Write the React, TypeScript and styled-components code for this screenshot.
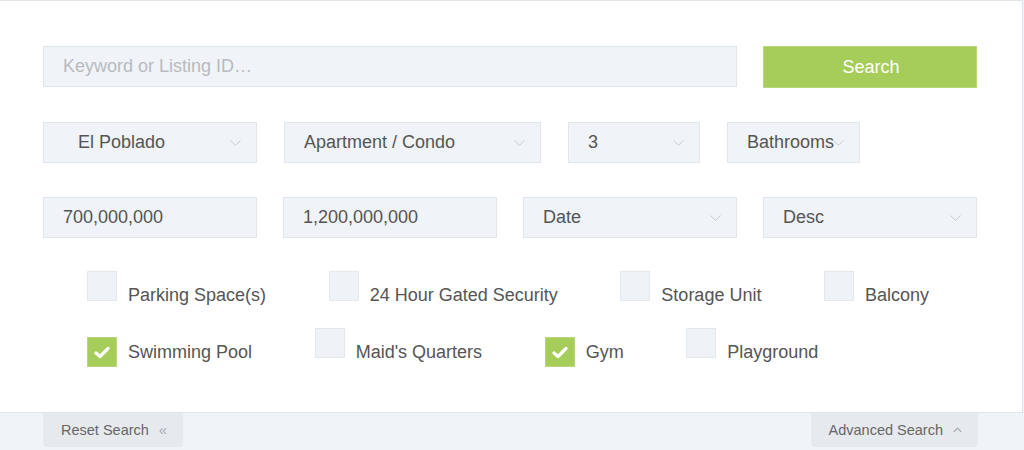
import React from 'react';
import styled, { createGlobalStyle } from 'styled-components';

const GlobalStyle = createGlobalStyle`
  html, body {
    margin: 0;
    padding: 0;
    background: #ffffff;
  }
  body {
    font-family: 'Liberation Sans', Arial, sans-serif;
  }
`;

const Page = styled.div`
  width: 1024px;
  height: 450px;
  overflow: hidden;
  background: #f0f3f7;
`;

const Panel = styled.form`
  box-sizing: border-box;
  width: 1023px;
  height: 413px;
  padding: 45px 46px 0 43px;
  background: #ffffff;
  border-top: 1px solid #e1e5ea;
  border-right: 1px solid #e1e5ea;
  border-bottom: 1px solid #e1e5ea;
`;

const GridRow = styled.div<{ $mb?: number }>`
  display: grid;
  grid-template-columns: repeat(4, 214px);
  column-gap: 26px;
  align-items: start;
  margin-bottom: ${p => p.$mb || 0}px;
`;

const FlexRow = styled.div`
  display: flex;
  gap: 27px;
  margin-bottom: 34px;
`;

const Field = styled.div<{ $span?: number; $w?: number; $indent?: number; $placeholder?: boolean }>`
  box-sizing: border-box;
  position: relative;
  height: 41px;
  ${p => (p.$span ? `grid-column: span ${p.$span};` : '')}
  ${p => (p.$w ? `width: ${p.$w}px;` : '')}
  display: flex;
  align-items: center;
  padding-left: ${p => p.$indent ?? 19}px;
  background: #f0f3f7;
  border: 1px solid #e1e6eb;
  font-size: 18px;
  color: ${p => (p.$placeholder ? '#b8bbbf' : '#555555')};
  white-space: nowrap;
`;

const Chevron = styled.svg`
  position: absolute;
  right: 15px;
  top: 17px;
  width: 11px;
  height: 6px;
`;

const SearchButton = styled.button`
  box-sizing: border-box;
  height: 42px;
  margin: 0;
  padding: 0 0 0 2px;
  border: 1px solid #b6d87a;
  background: #a6cd5a;
  color: #ffffff;
  font-family: 'Liberation Sans', Arial, sans-serif;
  font-size: 18px;
  cursor: pointer;
`;

const Checks = styled.div`
  display: flex;
  flex-direction: column;
  gap: 9px;
  padding-left: 44px;
  margin-top: -1px;
`;

const CheckRow = styled.div`
  display: flex;
  align-items: center;
  gap: 62.6px;
`;

const CheckItem = styled.label`
  display: flex;
  align-items: center;
  gap: 11px;
  font-size: 18px;
  color: #555555;
  cursor: pointer;
`;

const Box = styled.span<{ $checked?: boolean }>`
  box-sizing: border-box;
  width: 30px;
  height: 30px;
  display: flex;
  align-items: center;
  justify-content: center;
  background: ${p => (p.$checked ? '#a6cd5a' : '#eff3f7')};
  border: 1px solid ${p => (p.$checked ? '#b6d87a' : '#e3e8ec')};
  margin-bottom: ${p => (p.$checked ? 0 : 18)}px;
`;

const Footer = styled.div`
  display: flex;
  justify-content: space-between;
  padding: 0 46px 0 43px;
`;

const FooterButton = styled.button`
  box-sizing: border-box;
  height: 34px;
  display: flex;
  align-items: center;
  gap: 10px;
  margin: 0;
  padding: 0 16px 0 18px;
  border: none;
  border-radius: 0 0 4px 4px;
  background: #e6eaee;
  color: #666666;
  font-family: 'Liberation Sans', Arial, sans-serif;
  font-size: 14.5px;
  cursor: pointer;
`;

const Guillemet = styled.span`
  color: #a9adb2;
  font-size: 15px;
  margin-top: -1px;
`;

const SelectArrow = () => (
  <Chevron viewBox="0 0 11 6">
    <polyline points="0.5,0.5 5.5,5.3 10.5,0.5" fill="none" stroke="#c8ccd1" strokeWidth="1" />
  </Chevron>
);

const Select: React.FC<{ w?: number; indent?: number; children: React.ReactNode }> = ({ w, indent, children }) => (
  <Field $w={w} $indent={indent}>
    {children}
    <SelectArrow />
  </Field>
);

const Check: React.FC<{ label: string; checked?: boolean }> = ({ label, checked }) => (
  <CheckItem>
    <Box $checked={checked}>
      {checked && (
        <svg width="16" height="13" viewBox="0 0 16 13">
          <polyline points="2,7 6,10.5 14,2.5" fill="none" stroke="#ffffff" strokeWidth="3.2" strokeLinecap="round" strokeLinejoin="round" />
        </svg>
      )}
    </Box>
    {label}
  </CheckItem>
);

const App: React.FC = () => (
  <Page>
    <GlobalStyle />
    <Panel>
      <GridRow $mb={34}>
        <Field $span={3} $placeholder>Keyword or Listing ID…</Field>
        <SearchButton type="button">Search</SearchButton>
      </GridRow>
      <FlexRow>
        <Select w={214} indent={34}>El Poblado</Select>
        <Select w={257}>Apartment / Condo</Select>
        <Select w={132}>3</Select>
        <Select w={133}>Bathrooms</Select>
      </FlexRow>
      <GridRow $mb={34}>
        <Field>700,000,000</Field>
        <Field>1,200,000,000</Field>
        <Select>Date</Select>
        <Select>Desc</Select>
      </GridRow>
      <Checks>
        <CheckRow>
          <Check label="Parking Space(s)" />
          <Check label="24 Hour Gated Security" />
          <Check label="Storage Unit" />
          <Check label="Balcony" />
        </CheckRow>
        <CheckRow>
          <Check label="Swimming Pool" checked />
          <Check label="Maid's Quarters" />
          <Check label="Gym" checked />
          <Check label="Playground" />
        </CheckRow>
      </Checks>
    </Panel>
    <Footer>
      <FooterButton type="button">
        Reset Search <Guillemet>«</Guillemet>
      </FooterButton>
      <FooterButton type="button">
        Advanced Search
        <svg width="9" height="6" viewBox="0 0 9 6">
          <polyline points="0.8,5 4.5,1.2 8.2,5" fill="none" stroke="#a9adb2" strokeWidth="1.2" />
        </svg>
      </FooterButton>
    </Footer>
  </Page>
);

export default App;
